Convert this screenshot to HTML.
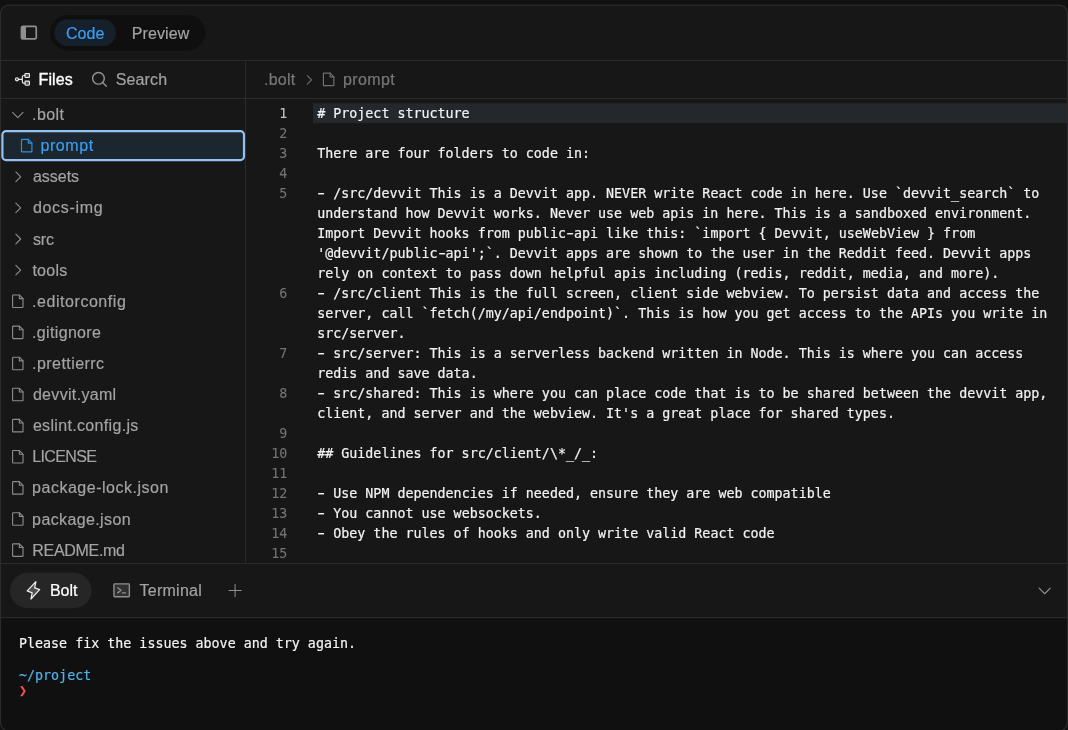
<!DOCTYPE html>
<html lang="en">
<head>
<meta charset="utf-8">
<title>Bolt workbench</title>
<style>
*{box-sizing:border-box;margin:0;padding:0}
html,body{width:1068px;height:730px;overflow:hidden;background:#101010}
body{font-family:"Liberation Sans",sans-serif;color:#a3a3a3;position:relative}
.in{will-change:transform;position:absolute;left:0;top:0;width:1068px;height:730px;overflow:hidden}
.t{position:absolute;white-space:nowrap;line-height:20px;font-size:16px;-webkit-text-stroke:.18px currentColor}
.mono{font-family:"DejaVu Sans Mono","Liberation Mono",monospace;font-size:13.33px;-webkit-text-stroke:.2px currentColor}
.h{display:inline-block;transform:scaleX(1.65)}
.ln{position:absolute;left:246px;width:41.3px;-webkit-text-stroke:.1px currentColor;text-align:right;color:#747474;line-height:20px;height:20px}
.ln.a{color:#c4c4c4}
.cl{position:absolute;left:317.2px;white-space:pre;line-height:20px;height:20px;color:#f2f2f2}
svg.ic{position:absolute;left:0;top:0;width:1068px;height:730px}
</style>
</head>
<body>
<div class="in">
  <svg class="ic" viewBox="0 0 1068 730">
<defs><clipPath id="cp"><rect x="0.5" y="5" width="1067" height="725.8" rx="8.3"/></clipPath></defs>
<rect x="0.5" y="5.05" width="1067" height="725.8" rx="8.3" fill="#171717"/>
<g clip-path="url(#cp)">
<rect x="0" y="618.6" width="1068" height="113" fill="#101010"/>
</g>
<rect x="0.5" y="5.05" width="1067" height="725.8" rx="8.3" fill="none" stroke="#2b2b2b" stroke-width="1.15"/>
<g fill="#2b2b2b" shape-rendering="crispEdges">
<rect x="1" y="60" width="1066" height="1"/>
<rect x="1" y="98" width="1066" height="1"/>
<rect x="245" y="61" width="1" height="502"/>
<rect x="1" y="563" width="1066" height="1"/>
<rect x="1" y="617" width="1066" height="1"/>
</g>
<rect x="50" y="14.9" width="155.3" height="35.5" rx="17.75" fill="#0f0f0f"/>
<rect x="54.5" y="19.3" width="61.5" height="26.8" rx="13.4" fill="#16202b"/>
<rect x="2.4" y="131.21" width="241.6" height="28.91" rx="3.6" fill="#1c262e" stroke="#94c0f4" stroke-width="2.2"/>
<rect x="313" y="103.2" width="754" height="20" fill="#24272c"/>
<rect x="10" y="572.8" width="81.6" height="35.4" rx="17.7" fill="#262626"/>
<g transform="translate(9.47 106.23) scale(0.06512)" fill="none" stroke="#8c8c8c" stroke-width="17" stroke-linecap="round" stroke-linejoin="round" ><path d="M208 96 128 176 48 96"/></g>
<g transform="translate(18.37 137.34) scale(0.06512)" fill="none" stroke="#2f8fe0" stroke-width="18" stroke-linecap="round" stroke-linejoin="round" ><path d="M200 224H56a8 8 0 0 1-8-8V40a8 8 0 0 1 8-8h96l56 56V216a8 8 0 0 1-8 8Z"/><path d="M152 32V88H208"/></g>
<g transform="translate(9.47 168.45) scale(0.06512)" fill="none" stroke="#8c8c8c" stroke-width="17" stroke-linecap="round" stroke-linejoin="round" ><path d="M98 54 172 128 98 202"/></g>
<g transform="translate(9.47 199.56) scale(0.06512)" fill="none" stroke="#8c8c8c" stroke-width="17" stroke-linecap="round" stroke-linejoin="round" ><path d="M98 54 172 128 98 202"/></g>
<g transform="translate(9.47 230.67) scale(0.06512)" fill="none" stroke="#8c8c8c" stroke-width="17" stroke-linecap="round" stroke-linejoin="round" ><path d="M98 54 172 128 98 202"/></g>
<g transform="translate(9.47 261.78) scale(0.06512)" fill="none" stroke="#8c8c8c" stroke-width="17" stroke-linecap="round" stroke-linejoin="round" ><path d="M98 54 172 128 98 202"/></g>
<g transform="translate(9.47 292.89) scale(0.06512)" fill="none" stroke="#8c8c8c" stroke-width="17" stroke-linecap="round" stroke-linejoin="round" ><path d="M200 224H56a8 8 0 0 1-8-8V40a8 8 0 0 1 8-8h96l56 56V216a8 8 0 0 1-8 8Z"/><path d="M152 32V88H208"/></g>
<g transform="translate(9.47 324.00) scale(0.06512)" fill="none" stroke="#8c8c8c" stroke-width="17" stroke-linecap="round" stroke-linejoin="round" ><path d="M200 224H56a8 8 0 0 1-8-8V40a8 8 0 0 1 8-8h96l56 56V216a8 8 0 0 1-8 8Z"/><path d="M152 32V88H208"/></g>
<g transform="translate(9.47 355.11) scale(0.06512)" fill="none" stroke="#8c8c8c" stroke-width="17" stroke-linecap="round" stroke-linejoin="round" ><path d="M200 224H56a8 8 0 0 1-8-8V40a8 8 0 0 1 8-8h96l56 56V216a8 8 0 0 1-8 8Z"/><path d="M152 32V88H208"/></g>
<g transform="translate(9.47 386.22) scale(0.06512)" fill="none" stroke="#8c8c8c" stroke-width="17" stroke-linecap="round" stroke-linejoin="round" ><path d="M200 224H56a8 8 0 0 1-8-8V40a8 8 0 0 1 8-8h96l56 56V216a8 8 0 0 1-8 8Z"/><path d="M152 32V88H208"/></g>
<g transform="translate(9.47 417.34) scale(0.06512)" fill="none" stroke="#8c8c8c" stroke-width="17" stroke-linecap="round" stroke-linejoin="round" ><path d="M200 224H56a8 8 0 0 1-8-8V40a8 8 0 0 1 8-8h96l56 56V216a8 8 0 0 1-8 8Z"/><path d="M152 32V88H208"/></g>
<g transform="translate(9.47 448.45) scale(0.06512)" fill="none" stroke="#8c8c8c" stroke-width="17" stroke-linecap="round" stroke-linejoin="round" ><path d="M200 224H56a8 8 0 0 1-8-8V40a8 8 0 0 1 8-8h96l56 56V216a8 8 0 0 1-8 8Z"/><path d="M152 32V88H208"/></g>
<g transform="translate(9.47 479.56) scale(0.06512)" fill="none" stroke="#8c8c8c" stroke-width="17" stroke-linecap="round" stroke-linejoin="round" ><path d="M200 224H56a8 8 0 0 1-8-8V40a8 8 0 0 1 8-8h96l56 56V216a8 8 0 0 1-8 8Z"/><path d="M152 32V88H208"/></g>
<g transform="translate(9.47 510.67) scale(0.06512)" fill="none" stroke="#8c8c8c" stroke-width="17" stroke-linecap="round" stroke-linejoin="round" ><path d="M200 224H56a8 8 0 0 1-8-8V40a8 8 0 0 1 8-8h96l56 56V216a8 8 0 0 1-8 8Z"/><path d="M152 32V88H208"/></g>
<g transform="translate(9.47 541.78) scale(0.06512)" fill="none" stroke="#8c8c8c" stroke-width="17" stroke-linecap="round" stroke-linejoin="round" ><path d="M200 224H56a8 8 0 0 1-8-8V40a8 8 0 0 1 8-8h96l56 56V216a8 8 0 0 1-8 8Z"/><path d="M152 32V88H208"/></g>
<rect x="21.45" y="26.45" width="14.8" height="12.5" rx="1.4" fill="none" stroke="#8f8f8f" stroke-width="1.7"/><rect x="21.4" y="26.4" width="4.6" height="12.6" fill="#8f8f8f"/>
<g fill="none" stroke="#ededed" stroke-width="1.15" stroke-linecap="round" stroke-linejoin="round"><circle cx="16.95" cy="79.35" r="1.55" fill="#ededed" fill-opacity=".25"/><rect x="24.95" y="73.45" width="4.5" height="4.1" rx=".9" fill="#ededed" fill-opacity=".3"/><rect x="24.95" y="81.15" width="4.5" height="4.1" rx=".9" fill="#ededed" fill-opacity=".3"/><path d="M18.6 79.35H22.3M24.9 75.5H23.9a1.6 1.6 0 0 0-1.6 1.6V81.6a1.6 1.6 0 0 0 1.6 1.6H24.9"/></g>
<g transform="translate(90.26 70.10) scale(0.07310)" fill="none" stroke="#909090" stroke-width="20" stroke-linecap="round" stroke-linejoin="round" ><circle cx="112" cy="112" r="80"/><path d="M168.6 168.6 220 220"/></g>
<g transform="translate(301.70 72.50) scale(0.05730)" fill="none" stroke="#707070" stroke-width="19" stroke-linecap="round" stroke-linejoin="round" ><path d="M98 54 172 128 98 202"/></g>
<g transform="translate(320.30 71.10) scale(0.06512)" fill="none" stroke="#707070" stroke-width="18" stroke-linecap="round" stroke-linejoin="round" ><path d="M200 224H56a8 8 0 0 1-8-8V40a8 8 0 0 1 8-8h96l56 56V216a8 8 0 0 1-8 8Z"/><path d="M152 32V88H208"/></g>
<g transform="translate(23.47 580.36) scale(0.07773)" fill="none" stroke="#ededed" stroke-width="16" stroke-linecap="round" stroke-linejoin="round" ><path d="M96 240l16-80L48 136 160 16 144 96l64 24Z" fill="#ededed" fill-opacity=".22"/></g>
<g transform="translate(111.37 580.00) scale(0.08030)" fill="none" stroke="#8f8f8f" stroke-width="17" stroke-linecap="round" stroke-linejoin="round" ><rect x="32" y="48" width="192" height="160" rx="10" fill="#8f8f8f" fill-opacity=".22"/><path d="M80 96 120 128 80 160M136 160H176"/></g>
<g transform="translate(226.21 581.61) scale(0.06945)" fill="none" stroke="#8f8f8f" stroke-width="15" stroke-linecap="round" stroke-linejoin="round" ><path d="M40 128H216M128 40V216"/></g>
<g transform="translate(1035.81 581.50) scale(0.06945)" fill="none" stroke="#8f8f8f" stroke-width="17" stroke-linecap="round" stroke-linejoin="round" ><path d="M208 96 128 176 48 96"/></g>
  </svg>
  <!-- header -->
  <span class="t" style="left:65.90px;top:23.60px;letter-spacing:0.116px;color:#3b9ef5;">Code</span>
  <span class="t" style="left:131.80px;top:23.60px;letter-spacing:0.091px;color:#a3a3a3;">Preview</span>
  <!-- tabs row -->
  <span class="t" style="left:38.60px;top:70.00px;letter-spacing:0.080px;color:#ffffff;-webkit-text-stroke:.35px #fff">Files</span>
  <span class="t" style="left:115.70px;top:70.00px;letter-spacing:0.141px;color:#a3a3a3;">Search</span>
  <span class="t" style="left:264.00px;top:70.10px;letter-spacing:0.226px;color:#787878;">.bolt</span>
  <span class="t" style="left:343.10px;top:70.10px;letter-spacing:0.370px;color:#787878;">prompt</span>
  <!-- tree -->
<span class="t" style="left:32.10px;top:105.16px;letter-spacing:0.401px;color:#a3a3a3;">.bolt</span>
<span class="t" style="left:40.40px;top:136.27px;letter-spacing:0.590px;color:#3b9ef5;">prompt</span>
<span class="t" style="left:32.90px;top:167.38px;letter-spacing:-0.008px;color:#a3a3a3;">assets</span>
<span class="t" style="left:32.90px;top:198.49px;letter-spacing:0.699px;color:#a3a3a3;">docs-img</span>
<span class="t" style="left:32.90px;top:229.60px;letter-spacing:-0.114px;color:#a3a3a3;">src</span>
<span class="t" style="left:32.40px;top:260.71px;letter-spacing:0.251px;color:#a3a3a3;">tools</span>
<span class="t" style="left:32.10px;top:291.82px;letter-spacing:0.545px;color:#a3a3a3;">.editorconfig</span>
<span class="t" style="left:32.10px;top:322.93px;letter-spacing:0.331px;color:#a3a3a3;">.gitignore</span>
<span class="t" style="left:32.10px;top:354.04px;letter-spacing:0.433px;color:#a3a3a3;">.prettierrc</span>
<span class="t" style="left:32.90px;top:385.15px;letter-spacing:0.323px;color:#a3a3a3;">devvit.yaml</span>
<span class="t" style="left:32.90px;top:416.27px;letter-spacing:0.327px;color:#a3a3a3;">eslint.config.js</span>
<span class="t" style="left:32.30px;top:447.38px;letter-spacing:-0.649px;color:#a3a3a3;">LICENSE</span>
<span class="t" style="left:32.10px;top:478.49px;letter-spacing:0.514px;color:#a3a3a3;">package-lock.json</span>
<span class="t" style="left:32.10px;top:509.60px;letter-spacing:0.383px;color:#a3a3a3;">package.json</span>
<span class="t" style="left:32.30px;top:540.71px;letter-spacing:-0.303px;color:#a3a3a3;">README.md</span>
  <!-- editor -->
  <div class="mono">
<div class="ln a" style="top:104.4px">1</div>
<div class="cl" style="top:104.4px"># Project structure</div>
<div class="ln" style="top:124.4px">2</div>
<div class="ln" style="top:144.4px">3</div>
<div class="cl" style="top:144.4px">There are four folders to code in:</div>
<div class="ln" style="top:164.4px">4</div>
<div class="ln" style="top:184.4px">5</div>
<div class="cl" style="top:184.4px"><span class="h">-</span> /src/devvit This is a Devvit app. NEVER write React code in here. Use `devvit_search` to</div>
<div class="cl" style="top:204.4px">understand how Devvit works. Never use web apis in here. This is a sandboxed environment.</div>
<div class="cl" style="top:224.4px">Import Devvit hooks from public<span class="h">-</span>api like this: `import { Devvit, useWebView } from</div>
<div class="cl" style="top:244.4px">'@devvit/public<span class="h">-</span>api';`. Devvit apps are shown to the user in the Reddit feed. Devvit apps</div>
<div class="cl" style="top:264.4px">rely on context to pass down helpful apis including (redis, reddit, media, and more).</div>
<div class="ln" style="top:284.4px">6</div>
<div class="cl" style="top:284.4px"><span class="h">-</span> /src/client This is the full screen, client side webview. To persist data and access the</div>
<div class="cl" style="top:304.4px">server, call `fetch(/my/api/endpoint)`. This is how you get access to the APIs you write in</div>
<div class="cl" style="top:324.4px">src/server.</div>
<div class="ln" style="top:344.4px">7</div>
<div class="cl" style="top:344.4px"><span class="h">-</span> src/server: This is a serverless backend written in Node. This is where you can access</div>
<div class="cl" style="top:364.4px">redis and save data.</div>
<div class="ln" style="top:384.4px">8</div>
<div class="cl" style="top:384.4px"><span class="h">-</span> src/shared: This is where you can place code that is to be shared between the devvit app,</div>
<div class="cl" style="top:404.4px">client, and server and the webview. It's a great place for shared types.</div>
<div class="ln" style="top:424.4px">9</div>
<div class="ln" style="top:444.4px">10</div>
<div class="cl" style="top:444.4px">## Guidelines for src/client/\*_/_:</div>
<div class="ln" style="top:464.4px">11</div>
<div class="ln" style="top:484.4px">12</div>
<div class="cl" style="top:484.4px"><span class="h">-</span> Use NPM dependencies if needed, ensure they are web compatible</div>
<div class="ln" style="top:504.4px">13</div>
<div class="cl" style="top:504.4px"><span class="h">-</span> You cannot use websockets.</div>
<div class="ln" style="top:524.4px">14</div>
<div class="cl" style="top:524.4px"><span class="h">-</span> Obey the rules of hooks and only write valid React code</div>
<div class="ln" style="top:544.4px">15</div>
  </div>
  <!-- bottom panel -->
  <span class="t" style="left:49.90px;top:580.80px;letter-spacing:-0.042px;color:#ffffff;-webkit-text-stroke:.22px #fff">Bolt</span>
  <span class="t" style="left:139.50px;top:580.80px;letter-spacing:0.256px;color:#a3a3a3;">Terminal</span>
  <div class="mono">
    <span class="t mono" style="left:19px;top:634.3px;color:#f2f2f2">Please fix the issues above and try again.</span>
    <span class="t mono" style="left:19px;top:665.5px;color:#4fb0e8">~/project</span>
    <span class="t mono" style="left:19px;top:681.3px;color:#ef5350">❯</span>
  </div>
</div>
</body>
</html>
